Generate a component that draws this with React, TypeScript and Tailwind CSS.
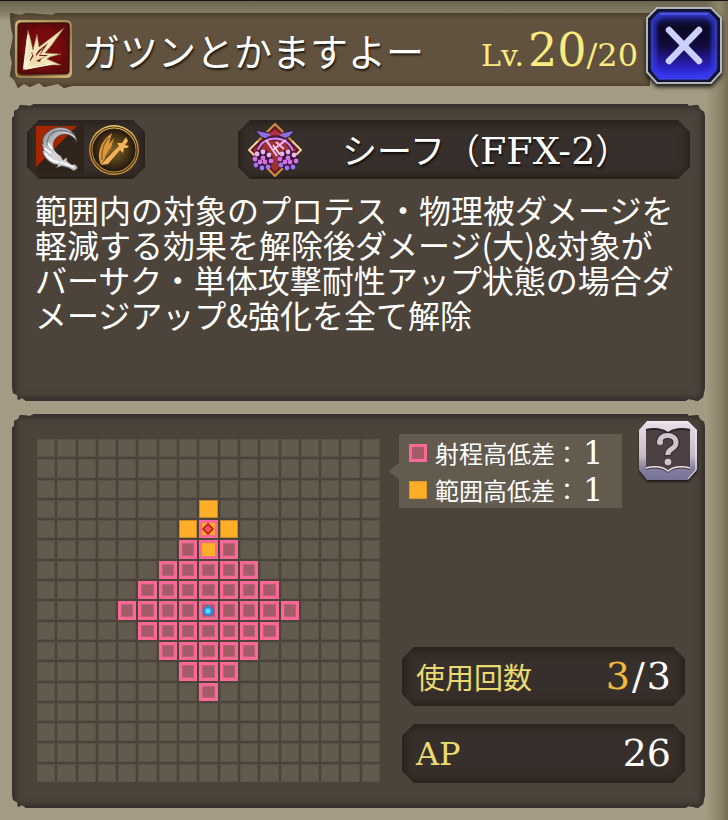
import { useState } from 'react';
import type { ReactNode } from 'react';
import clsx from 'clsx';

const SIZE = 17;
const CENTER = 8;
const TARGET_ROW = 4;

const DESCRIPTION = `範囲内の対象のプロテス・物理被ダメージを
軽減する効果を解除後ダメージ(大)&対象が
バーサク・単体攻撃耐性アップ状態の場合ダ
メージアップ&強化を全て解除`;

const serif = "font-['DejaVu_Serif','Noto_Sans_CJK_JP',serif]";

function AbilityIcon() {
  return (
    <svg viewBox="0 0 60 60" className="size-[60px] shrink-0" aria-hidden="true">
      <defs>
        <radialGradient id="red">
          <stop offset="0" stopColor="#7d0b0e" />
          <stop offset="0.75" stopColor="#740a0c" />
          <stop offset="1" stopColor="#5d0a0b" />
        </radialGradient>
        <linearGradient id="frame" x2="1" y2="1">
          <stop offset="0" stopColor="#c1ab69" />
          <stop offset="0.4" stopColor="#8c6a3b" />
          <stop offset="0.6" stopColor="#66422a" />
          <stop offset="1" stopColor="#d0b673" />
        </linearGradient>
      </defs>
      <rect x="1" y="1" width="57" height="58" rx="5" fill="url(#frame)" />
      <rect x="2" y="2" width="55" height="56" rx="4" fill="none" stroke="#d0ba78" strokeWidth="1" />
      <rect x="4" y="4" width="51" height="51" rx="3" fill="url(#red)" stroke="#350b0b" />
      <path
        d="M9 51 L14 11 L17 22 L19 31 L23 15 L25 28 L50 9 L37 27 L31 34 L47 35 L36 38 L33 40 L47 46 L30 46 Z"
        fill="#f3e6b8"
        stroke="#8e6c42"
        strokeWidth="0.6"
      />
      <path d="M15 40 L18 33 L20 38 L25 31 L34 24 L26 36 L34 36 L27 40 L26 43 L17 45 Z" fill="#741413" />
      <path d="M15 44 L22 33 L22 37 L30 28 L25 37 L32 37 L22 42 L31 44 L17 46 Z" fill="#f0deaa" />
      <path d="M10 49 L14 16 M11 49 L18 35 M11 50 L38 45" fill="none" stroke="#fff8dc" strokeWidth="1.6" />
    </svg>
  );
}

function SlashIcon() {
  return (
    <svg viewBox="0 0 48 48" className="size-12" aria-hidden="true">
      <defs>
        <linearGradient id="steel" x2="1" y2="1">
          <stop offset="0" stopColor="#87878b" />
          <stop offset="0.5" stopColor="#d4d4d9" />
          <stop offset="1" stopColor="#bebec3" />
        </linearGradient>
      </defs>
      <path d="M0 0 H48 V48 H0 Z" fill="#2e241b" />
      <path d="M0 0 H41 L0 41 Z" fill="#a72600" />
      <path
        d="M41 16 C40 5 29 -1 19 2 C10 5 5 12 7 18 L5 17 L8 24 L6 25 C8 32 14 38 22 39 L20 42 L26 40 L33 42 L38 45 L42 42 L39 38 L36 39 L31 35 L31 31 L27 34 L25 30 C17 26 15 18 20 12 C26 6 36 7 41 16 Z"
        fill="url(#steel)"
        stroke="#45413e"
        strokeWidth="0.8"
      />
      <path d="M14 9 C20 3 32 3 38 9 M11 19 C11 13 13 8 19 5" fill="none" stroke="#76777c" strokeWidth="1.3" />
      <path d="M8 22 L15 27 M9 27 C13 33 18 36 23 36 M12 17 L16 23" fill="none" stroke="#ffffff" strokeWidth="2" />
      <path d="M24 36 L38 41" stroke="#f4f4f5" strokeWidth="2" />
    </svg>
  );
}

function PhysicalIcon() {
  return (
    <svg viewBox="0 0 52 52" className="size-[52px]" aria-hidden="true">
      <defs>
        <radialGradient id="bronze">
          <stop offset="0" stopColor="#806126" />
          <stop offset="0.6" stopColor="#4d3918" />
          <stop offset="1" stopColor="#241a10" />
        </radialGradient>
        <linearGradient id="gold" x2="0" y2="1">
          <stop offset="0" stopColor="#f0cc6c" />
          <stop offset="0.5" stopColor="#be842e" />
          <stop offset="1" stopColor="#c69843" />
        </linearGradient>
      </defs>
      <circle cx="26" cy="26" r="25" fill="url(#gold)" />
      <circle cx="26" cy="26" r="23" fill="none" stroke="#503717" strokeWidth="1.2" />
      <circle cx="26" cy="26" r="21" fill="url(#bronze)" stroke="#20180f" />
      <path d="M13 41 C8 31 12 17 24 9 L21 20 L26 14 L22 27 L18 33 Z" fill="#d9983c" />
      <path d="M13 41 L18 35 L31 22 L29 19 L34 19 L38 13 L40 17 L37 21 L41 22 L39 24 L36 24 L35 29 L32 26 L20 40 Z" fill="#f2b458" />
      <path d="M14 36 C13 27 16 18 21 14 M17 34 L22 25" fill="none" stroke="#8c5a22" strokeWidth="1.2" />
    </svg>
  );
}

const petals = [[0, -8], [6, -5], [8, 1], [5, 7], [-1, 8], [-7, 5], [-8, -1], [-6, -6], [0, -2], [2, 2], [-3, 2]];

function JobIcon() {
  return (
    <svg viewBox="0 0 54 54" className="size-[54px]" aria-hidden="true">
      <path d="M27 1 L53 27 L27 53 L1 27 Z" fill="#721d26" stroke="#c89340" strokeWidth="2" />
      <path d="M27 5 L49 27 L27 49 L5 27 Z" fill="#9e3030" stroke="#4e1720" />
      <path d="M10 18 L1 27 L10 36 M44 18 L53 27 L44 36" fill="none" stroke="#f2dfc7" strokeWidth="1.5" />
      <path d="M7 7 L21 10 L27 14 L34 10 L47 7 L41 14 L33 17 L21 17 L13 14 Z" fill="#8a70dc" stroke="#2e1638" />
      <path d="M21 10 L27 8 L34 10 L31 14 H23 Z" fill="#b22f40" />
      <path d="M10 28 C15 10 39 9 45 29" fill="none" stroke="#48183f" strokeWidth="4" />
      <path d="M10 27 C15 12 39 11 45 28" fill="none" stroke="#d28aee" strokeWidth="2" />
      <path d="M18 17 L29 33 M38 17 L25 27 M28 19 L36 26" stroke="#f4b6ee" strokeWidth="2.2" />
      <path d="M25 22 L33 33" stroke="#fff0ff" strokeWidth="1.5" />
      {[15, 40].map((cx) => (
        <g key={cx}>
          <circle cx={cx} cy="37" r="10" fill="#3d1439" />
          {petals.map(([x, y], i) => (
            <circle
              key={i}
              cx={cx + x}
              cy={37 + y}
              r="2.4"
              fill={y > 3 ? '#9a77f5' : y < -3 ? '#e9b4ea' : '#d172e4'}
            />
          ))}
        </g>
      ))}
    </svg>
  );
}

function CloseIcon() {
  return (
    <svg viewBox="0 0 76 78" className="h-[78px] w-[76px] drop-shadow-[0_3px_2px_#17130f]" aria-hidden="true">
      <defs>
        <linearGradient id="blue" x2="0" y2="1">
          <stop offset="0" stopColor="#20207c" />
          <stop offset="0.22" stopColor="#0b0822" />
          <stop offset="0.5" stopColor="#120a3c" />
          <stop offset="0.8" stopColor="#2a20b8" />
          <stop offset="1" stopColor="#3a33ff" />
        </linearGradient>
        <filter id="glow">
          <feGaussianBlur stdDeviation="2" />
        </filter>
      </defs>
      <path d="M11 1 H65 L75 11 V65 L65 76 H11 L1 65 V11 Z" fill="#101022" stroke="#b4b6bd" strokeWidth="2" />
      <path d="M13 6 H63 L70 14 V63 L62 72 H13 L6 63 V14 Z" fill="url(#blue)" />
      <path d="M14 8 H62 L68 15 V62 L61 69 H14 L8 62 V15 Z" fill="none" stroke="#353be8" strokeWidth="4" filter="url(#glow)" />
      <path d="M13 6 H63 L70 14 V63 L62 72 H13 L6 63 V14 Z" fill="none" stroke="#4450f0" strokeWidth="1" />
      <path d="M14 7 H62" stroke="#6477f0" strokeWidth="1" />
      <path d="M23 23 L53 54 M53 23 L23 54" stroke="#cbd0ff" strokeWidth="6.5" strokeLinecap="round" />
    </svg>
  );
}

function HelpIcon() {
  return (
    <svg viewBox="0 0 60 62" className="h-[62px] w-[60px] drop-shadow-[0_2px_1px_#201b19]" aria-hidden="true">
      <defs>
        <linearGradient id="silver" x2="0" y2="1">
          <stop offset="0" stopColor="#e9dfe9" />
          <stop offset="0.6" stopColor="#c6b9c6" />
          <stop offset="0.8" stopColor="#85809f" />
          <stop offset="1" stopColor="#77739a" />
        </linearGradient>
      </defs>
      <path d="M9 1 H50 L59 10 V50 L50 60 H9 L1 50 V10 Z" fill="url(#silver)" />
      <path d="M9 2 H50 L58 10 V50 L50 59" fill="none" stroke="#f8f0f5" strokeWidth="1" />
      <path d="M8 10 C16 8 25 9 30 13 C35 9 44 8 52 10 V50 C43 48 35 48 30 53 C24 48 16 48 8 50 Z" fill="#4d4043" />
      <path d="M8 10 C16 8 25 9 30 13 C35 9 44 8 52 10" fill="none" stroke="#292426" strokeWidth="2" />
      <path d="M8 48 C16 46 24 46 30 51 C36 46 44 46 52 48" fill="none" stroke="#e8dee8" strokeWidth="1.5" />
      <path d="M22 23 C20 13 39 13 38 23 C38 30 29 28 30 36" fill="none" stroke="#292527" strokeWidth="7" />
      <path d="M22 23 C20 13 39 13 38 23 C38 30 29 28 30 35" fill="none" stroke="#d1c4cc" strokeWidth="5" />
      <circle cx="22" cy="22" r="3" fill="#d1c4cc" />
      <circle cx="30" cy="42" r="3.3" fill="#d1c4cc" />
    </svg>
  );
}

function Panel({ children, className }: { children: ReactNode; className?: string }) {
  return (
    <section
      className={clsx(
        'bg-[#4c443b] shadow-[inset_0_0_3px_3px_#3b3232,inset_0_0_10px_2px_#332d28]',
        '[clip-path:polygon(0_14px,2px_12px,2px_7px,6px_5px,8px_1px,18px_2px,22px_0,calc(100%-18px)_0,calc(100%-16px)_2px,calc(100%-7px)_1px,calc(100%-5px)_5px,calc(100%-1px)_8px,100%_14px,100%_calc(100%-14px),calc(100%-2px)_calc(100%-4px),calc(100%-7px)_100%,calc(100%-16px)_calc(100%-2px),calc(100%-20px)_100%,14px_100%,10px_calc(100%-3px),6px_calc(100%-1px),5px_calc(100%-6px),1px_calc(100%-8px),0_calc(100%-16px))]',
        className
      )}
    >
      {children}
    </section>
  );
}

function Plate({ children, className }: { children: ReactNode; className?: string }) {
  return (
    <div
      className={clsx(
        'flex h-[59px] items-center bg-[#372f2b] shadow-[inset_0_0_10px_3px_#281e18]',
        '[clip-path:polygon(12px_0,calc(100%-12px)_0,100%_12px,100%_calc(100%-12px),calc(100%-12px)_100%,12px_100%,0_calc(100%-12px),0_12px)]',
        className
      )}
    >
      {children}
    </div>
  );
}

function Cell({ row, col }: { row: number; col: number }) {
  const dx = Math.abs(col - CENTER);
  const inRange = dx + Math.abs(row - CENTER) <= 4;
  const inArea = dx + Math.abs(row - TARGET_ROW) <= 1;
  const isSelf = row === CENTER && col === CENTER;
  const isTarget = row === TARGET_ROW && col === CENTER;

  return (
    <div
      className={clsx(
        'flex aspect-square items-center justify-center',
        inRange && 'border-3 border-[#fb6895]',
        inRange && !inArea && 'bg-[#a45c69] shadow-[inset_0_0_0_1px_#ba6177]',
        inArea && 'bg-[#ffae27]',
        inArea && !inRange && 'border border-[#c5892c]',
        !inRange && !inArea && 'border border-[#5a5247] bg-[#625a4d]'
      )}
    >
      {isSelf && (
        <svg viewBox="0 0 12 12" className="size-3 shrink-0" aria-hidden="true">
          <path d="M6 0 L12 6 L6 12 L0 6 Z" fill="#168bff" />
          <circle cx="6" cy="6" r="2.7" fill="#5bdcff" />
        </svg>
      )}
      {isTarget && (
        <svg viewBox="0 0 12 12" className="size-3 shrink-0" aria-hidden="true">
          <path d="M6 1 L11 6 L6 11 L1 6 Z" fill="#f35b52" stroke="#c62329" strokeWidth="1.8" />
        </svg>
      )}
    </div>
  );
}

function RangeGrid() {
  return (
    <div className="grid w-[343px] shrink-0 grid-cols-17 gap-[2px]" role="img" aria-label="射程範囲">
      {Array.from({ length: SIZE * SIZE }, (_, i) => (
        <Cell key={i} row={Math.floor(i / SIZE)} col={i % SIZE} />
      ))}
    </div>
  );
}

function LegendRow({ label, value, area }: { label: string; value: number; area?: boolean }) {
  return (
    <div className="flex h-[37px] items-center">
      <span
        className={clsx(
          'mr-2 size-[18px] shrink-0',
          area ? 'border border-[#dc982c] bg-[#ffae27]' : 'border-3 border-[#fb6895] bg-[#a45c69]'
        )}
      />
      <dt className="whitespace-nowrap text-2xl">{label}</dt>
      <dd className={clsx('ml-1 text-[32px] leading-9', serif)}>{value}</dd>
    </div>
  );
}

export default function App() {
  const [open, setOpen] = useState(true);

  if (!open) return null;

  return (
    <main
      lang="ja"
      className="min-h-screen border-t border-[#18130f] bg-[#a39b83] bg-[linear-gradient(to_left,#756d55,#8d846b_8px,transparent_22px),linear-gradient(to_bottom,#696250,#898069_13px,transparent_20px)] pb-3 font-['Noto_Sans_CJK_JP',sans-serif] text-white"
    >
      <header className="flex items-start pt-[6px] pr-[6px] pl-[10px]">
        <div className="mt-[6px] -mr-1 flex h-[75px] min-w-0 flex-1 items-center bg-[#60523e] pb-[4px] pl-1 shadow-[inset_0_-3px_4px_#4c3d2a,inset_3px_0_5px_#4c3d2a,inset_0_3px_4px_#544630] [clip-path:polygon(0_0,10px_2px,17px_0,42px_2px,46px_0,100%_0,100%_calc(100%-2px),62px_calc(100%-2px),54px_100%,48px_calc(100%-4px),34px_calc(100%-1px),29px_calc(100%-5px),20px_calc(100%-1px),14px_calc(100%-4px),8px_100%,4px_calc(100%-8px),0_calc(100%-12px),2px_50px,0_40px,3px_24px,1px_14px)]">
          <AbilityIcon />
          <h1 className="mt-[2px] ml-2 text-[38px] leading-[56px] whitespace-nowrap [text-shadow:1px_2px_2px_#201a12]">ガツンとかますよー</h1>
          <p className={clsx('mt-[3px] mr-3 ml-auto flex items-baseline whitespace-nowrap text-[#fbea80]', serif)}>
            <span className="mr-1 text-[30px]">Lv.</span>
            <span className="text-[46px] leading-[60px]">20</span>
            <span className="text-[32px]">/20</span>
          </p>
        </div>
        <button type="button" aria-label="閉じる" onClick={() => setOpen(false)} className="relative shrink-0 cursor-pointer">
          <CloseIcon />
        </button>
      </header>

      <div className="flex flex-col gap-[13px] pt-[16px] pr-[23px] pl-[12px]">
        <Panel className="px-[15px] pt-4 pb-[69px]">
          <div className="flex items-center justify-between">
            <Plate className="w-[118px] gap-1 pl-[9px]">
              <SlashIcon />
              <PhysicalIcon />
            </Plate>
            <Plate className="w-[452px] pl-[10px]">
              <JobIcon />
              <h2 className="ml-10 flex items-baseline whitespace-nowrap text-[35px] leading-[52px] [text-shadow:1px_2px_2px_#12100e]">
                シーフ（<span className={clsx('text-[38px] leading-[52px]', serif)}>FFX-2</span>）
              </h2>
            </Plate>
          </div>
          <p className="mt-[13px] ml-2 text-[32px] leading-[35px] whitespace-pre">{DESCRIPTION}</p>
        </Panel>

        <Panel className="flex justify-between pt-[25px] pr-5 pb-[26px] pl-[25px]">
          <RangeGrid />
          <div className="-mb-px flex w-[283px] flex-col justify-between">
            <div className="-mt-[19px] -mr-[13px] flex items-start justify-between">
              <div className="mt-[14px] -ml-[14px] flex items-center">
                <div className="size-0 border-y-8 border-r-[11px] border-y-transparent border-r-[#625b4e]" />
                <dl className="w-[223px] bg-[#625b4e] px-[10px]">
                  <LegendRow label="射程高低差：" value={1} />
                  <LegendRow label="範囲高低差：" value={1} area />
                </dl>
              </div>
              <button type="button" aria-label="ヘルプ" className="shrink-0 cursor-pointer">
                <HelpIcon />
              </button>
            </div>
            <dl className="flex flex-col gap-[18px]">
              <Plate className="justify-between px-[14px]">
                <dt className="text-[29px] text-[#e9db72]">使用回数</dt>
                <dd className={clsx('flex gap-[2px] text-[38px]', serif)}>
                  <span className="text-[#f2bb3d]">3</span>
                  <span>/</span>
                  <span>3</span>
                </dd>
              </Plate>
              <Plate className="justify-between px-[14px]">
                <dt className={clsx('text-[32px] text-[#e9db72]', serif)}>AP</dt>
                <dd className={clsx('text-[38px]', serif)}>26</dd>
              </Plate>
            </dl>
          </div>
        </Panel>
      </div>
    </main>
  );
}
